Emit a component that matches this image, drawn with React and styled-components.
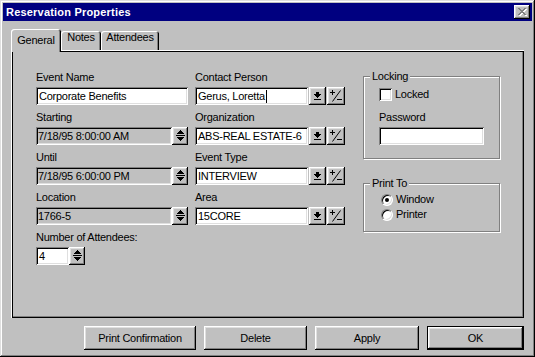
import React from 'react';
import styled, { createGlobalStyle, css } from 'styled-components';

const GlobalStyle = createGlobalStyle`
  html, body { margin: 0; padding: 0; background: #c0c0c0; }
  * { box-sizing: border-box; }
`;

const raised = css`
  box-shadow: inset -1px -1px #000, inset 1px 1px #fff, inset -2px -2px #808080, inset 2px 2px #dfdfdf;
`;
const sunken = css`
  box-shadow: inset 1px 1px #808080, inset -1px -1px #fff, inset 2px 2px #000, inset -2px -2px #dfdfdf;
`;

const Window = styled.div`
  width: 535px;
  height: 357px;
  background: #c0c0c0;
  padding: 3px;
  box-shadow: inset -1px -1px #000, inset 1px 1px #dfdfdf, inset -2px -2px #808080, inset 2px 2px #fff;
  display: flex;
  flex-direction: column;
  font-family: "Liberation Sans", Arial, sans-serif;
  font-size: 11px;
  letter-spacing: -0.25px;
  color: #000;
`;

const TitleBar = styled.div`
  height: 18px;
  background: #000080;
  color: #fff;
  display: flex;
  align-items: center;
  justify-content: space-between;
  padding: 0 2px 0 3px;
  font-weight: bold;
  letter-spacing: 0.2px;
`;

const CloseBtn = styled.div`
  width: 16px;
  height: 14px;
  background: #c0c0c0;
  ${raised};
  display: flex;
  align-items: center;
  justify-content: center;
`;

const Body = styled.div`
  display: flex;
  flex-direction: column;
  padding: 8px 8px 0;
`;

const TabStrip = styled.div`
  display: flex;
  align-items: flex-end;
  height: 21px;
  position: relative;
  z-index: 1;
`;

const Tab = styled.div`
  width: ${(p) => p.$w}px;
  height: ${(p) => (p.$active ? 23 : 19)}px;
  margin-bottom: ${(p) => (p.$active ? -2 : 0)}px;
  padding-top: ${(p) => (p.$active ? 5 : 0)}px;
  line-height: 13px;
  text-align: center;
  background: #c0c0c0;
  border-radius: 3px 3px 0 0;
  box-shadow: inset 1px 1px #fff, inset -1px 0 #000, inset -2px 0 #808080;
`;

const Panel = styled.div`
  height: 268px;
  background: #c0c0c0;
  box-shadow: inset 1px 1px #fff, inset -1px -1px #000, inset 2px 2px #000, inset -2px -2px #808080;
  display: flex;
  align-items: flex-start;
  padding: 21px 0 0 25px;
`;

const Column = styled.div`
  width: ${(p) => p.$w}px;
  margin-left: ${(p) => p.$ml || 0}px;
  display: flex;
  flex-direction: column;
  gap: ${(p) => (p.$gap === undefined ? 6 : p.$gap)}px;
`;

const Field = styled.div`
  display: flex;
  flex-direction: column;
  gap: 3px;
  margin-top: ${(p) => p.$mt || 0}px;
`;

const Label = styled.div`
  height: 13px;
  line-height: 13px;
  white-space: nowrap;
`;

const Row = styled.div`
  display: flex;
  gap: ${(p) => p.$gap || 0}px;
`;

const TextBox = styled.div`
  width: ${(p) => p.$w}px;
  height: 18px;
  line-height: 18px;
  padding: 0 ${(p) => (p.$gray ? 2 : 3)}px;
  background: ${(p) => (p.$gray ? '#c0c0c0' : '#fff')};
  ${sunken};
  white-space: nowrap;
  overflow: hidden;
`;

const Caret = styled.span`
  display: inline-block;
  width: 1px;
  height: 13px;
  background: #000;
  vertical-align: -3px;
  margin-left: 1px;
`;

const IconBtn = styled.div`
  width: ${(p) => p.$w}px;
  height: 18px;
  background: #c0c0c0;
  ${raised};
  display: flex;
  align-items: center;
  justify-content: center;
  padding-bottom: 1px;
`;

const Group = styled.div`
  position: relative;
  border: 1px solid #808080;
  box-shadow: inset 1px 1px #fff, 1px 1px #fff;
  margin-top: ${(p) => p.$mt}px;
  padding: ${(p) => p.$pad};
  display: flex;
  flex-direction: column;
`;

const Legend = styled.span`
  position: absolute;
  top: -7px;
  left: 6px;
  padding: 0 2px;
  background: #c0c0c0;
  line-height: 13px;
`;

const CheckRow = styled.div`
  display: flex;
  align-items: center;
  gap: ${(p) => p.$gap || 3}px;
  height: 13px;
  line-height: 13px;
  margin-top: ${(p) => p.$mt || 0}px;
`;

const CheckBox = styled.span`
  width: 13px;
  height: 13px;
  background: #fff;
  ${sunken};
`;

const Radio = styled.span`
  position: relative;
  width: 12px;
  height: 12px;
  border-radius: 50%;
  background: #fff;
  border: 1px solid;
  border-color: #808080 #fff #fff #808080;
  box-shadow: inset 1px 1px #000, inset -1px -1px #dfdfdf;
  &::after {
    content: '';
    display: ${(p) => (p.$checked ? 'block' : 'none')};
    position: absolute;
    left: 3px;
    top: 3px;
    width: 4px;
    height: 4px;
    border-radius: 50%;
    background: #000;
  }
`;

const ButtonBar = styled.div`
  display: flex;
  justify-content: flex-end;
  gap: 8px;
  margin-top: 8px;
`;

const Button = styled.div`
  width: ${(p) => p.$w}px;
  height: 24px;
  background: #c0c0c0;
  ${raised};
  border: ${(p) => (p.$default ? '1px solid #000' : 'none')};
  display: flex;
  align-items: center;
  justify-content: center;
  white-space: nowrap;
`;

const SpinIcon = () => (
  <svg width="9" height="11" viewBox="0 0 9 11" shapeRendering="crispEdges">
    <path
      fill="#000"
      d="M4 0h1v1H4z M3 1h3v1H3z M2 2h5v1H2z M1 3h7v1H1z M0 5h9v1H0z M1 7h7v1H1z M2 8h5v1H2z M3 9h3v1H3z M4 10h1v1H4z"
    />
  </svg>
);

const DropIcon = () => (
  <svg width="7" height="8" viewBox="0 0 7 8" shapeRendering="crispEdges">
    <path fill="#000" d="M2 0h3v2H2z M0 2h7v1H0z M1 3h5v1H1z M2 4h3v1H2z M3 5h1v1H3z M0 7h7v1H0z" />
  </svg>
);

const PlusMinusIcon = () => (
  <svg width="12" height="12" viewBox="0 0 12 12">
    <path fill="#000" shapeRendering="crispEdges" d="M0 2h5v1H0z M2 0h1v5H2z M7 9h5v1H7z" />
    <line x1="2.5" y1="11.5" x2="10.5" y2="0.5" stroke="#000" strokeWidth="1" />
  </svg>
);

const CloseIcon = () => (
  <svg width="9" height="8" viewBox="0 0 9 8" shapeRendering="crispEdges">
    <path
      fill="#fff"
      transform="translate(1 1)"
      d="M0 0h2v1H0z M6 0h2v1H6z M1 1h2v1H1z M5 1h2v1H5z M2 2h4v1H2z M3 3h2v1H3z M2 4h4v1H2z M1 5h2v1H1z M5 5h2v1H5z M0 6h2v1H0z M6 6h2v1H6z"
    />
    <path
      fill="#808080"
      d="M0 0h2v1H0z M6 0h2v1H6z M1 1h2v1H1z M5 1h2v1H5z M2 2h4v1H2z M3 3h2v1H3z M2 4h4v1H2z M1 5h2v1H1z M5 5h2v1H5z M0 6h2v1H0z M6 6h2v1H6z"
    />
  </svg>
);

const SpinField = ({ w, value, gray }) => (
  <Row>
    <TextBox $w={w} $gray={gray}>{value}</TextBox>
    <IconBtn $w={16}>
      <SpinIcon />
    </IconBtn>
  </Row>
);

const ComboField = ({ children }) => (
  <Row $gap={1}>
    <TextBox $w={113}>{children}</TextBox>
    <IconBtn $w={17}>
      <DropIcon />
    </IconBtn>
    <IconBtn $w={18}>
      <PlusMinusIcon />
    </IconBtn>
  </Row>
);

export default function App() {
  return (
    <>
      <GlobalStyle />
      <Window>
        <TitleBar>
          <span>Reservation Properties</span>
          <CloseBtn>
            <CloseIcon />
          </CloseBtn>
        </TitleBar>
        <Body>
          <TabStrip>
            <Tab $w={50} $active>General</Tab>
            <Tab $w={40}>Notes</Tab>
            <Tab $w={58}>Attendees</Tab>
          </TabStrip>
          <Panel>
            <Column $w={152}>
              <Field>
                <Label>Event Name</Label>
                <TextBox $w={152}>Corporate Benefits</TextBox>
              </Field>
              <Field>
                <Label>Starting</Label>
                <SpinField w={136} gray value="7/18/95 8:00:00 AM" />
              </Field>
              <Field>
                <Label>Until</Label>
                <SpinField w={136} gray value="7/18/95 6:00:00 PM" />
              </Field>
              <Field>
                <Label>Location</Label>
                <SpinField w={136} gray value="1766-5" />
              </Field>
              <Field>
                <Label>Number of Attendees:</Label>
                <SpinField w={33} value="4" />
              </Field>
            </Column>
            <Column $w={150} $ml={7}>
              <Field>
                <Label>Contact Person</Label>
                <ComboField>
                  Gerus, Loretta<Caret />
                </ComboField>
              </Field>
              <Field>
                <Label>Organization</Label>
                <ComboField>ABS-REAL ESTATE-6</ComboField>
              </Field>
              <Field>
                <Label>Event Type</Label>
                <ComboField>INTERVIEW</ComboField>
              </Field>
              <Field>
                <Label>Area</Label>
                <ComboField>15CORE</ComboField>
              </Field>
            </Column>
            <Column $w={137} $ml={18} $gap={0}>
              <Group $mt={5} $pad="11px 0 13px 15px">
                <Legend>Locking</Legend>
                <CheckRow $gap={3}>
                  <CheckBox />
                  <span>Locked</span>
                </CheckRow>
                <Field $mt={10}>
                  <Label>Password</Label>
                  <TextBox $w={105} />
                </Field>
              </Group>
              <Group $mt={24} $pad="9px 0 10px 17px">
                <Legend>Print To</Legend>
                <CheckRow>
                  <Radio $checked />
                  <span>Window</span>
                </CheckRow>
                <CheckRow $mt={2}>
                  <Radio />
                  <span>Printer</span>
                </CheckRow>
              </Group>
            </Column>
          </Panel>
          <ButtonBar>
            <Button $w={112}>Print Confirmation</Button>
            <Button $w={103}>Delete</Button>
            <Button $w={104}>Apply</Button>
            <Button $w={97} $default>OK</Button>
          </ButtonBar>
        </Body>
      </Window>
    </>
  );
}
